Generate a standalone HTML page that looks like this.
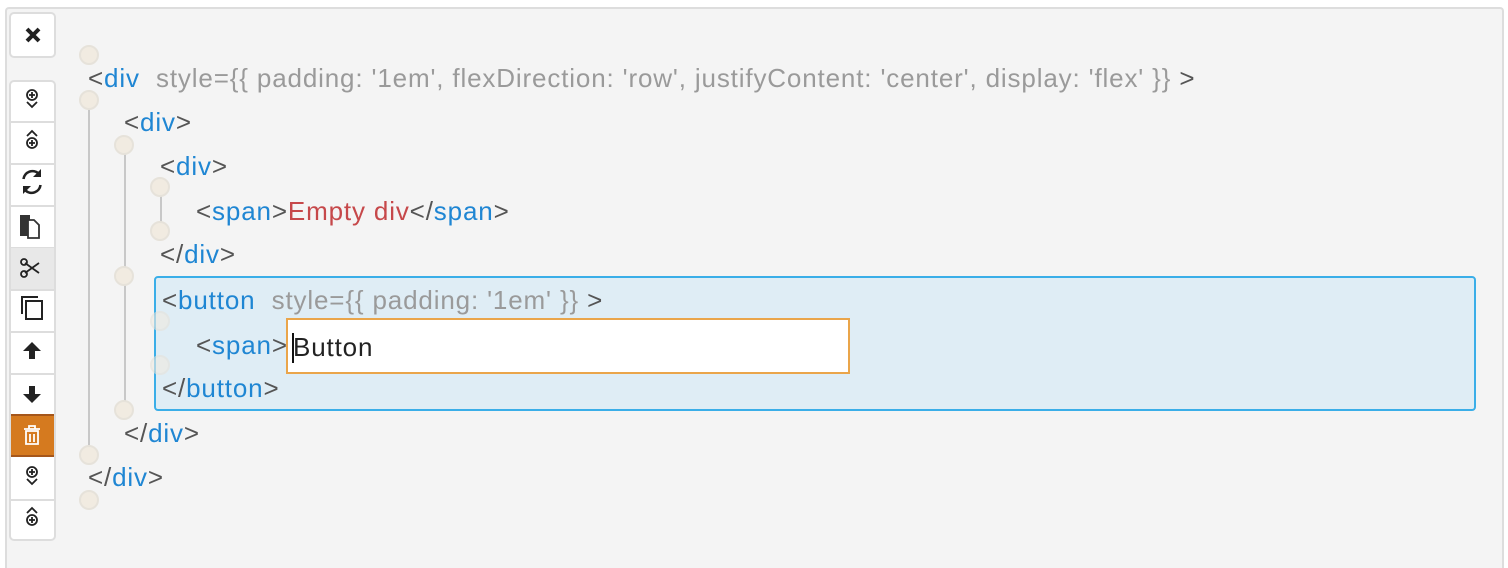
<!DOCTYPE html>
<html style="width:1508px;height:568px;overflow:hidden"><head><style>
*{margin:0;padding:0;box-sizing:border-box}
body{width:1508px;height:568px;background:#fff;position:relative;overflow:hidden;font-family:"Liberation Sans",sans-serif}
#frame{position:absolute;left:5px;top:7px;width:1499px;height:561px;background:#f4f4f4;border:2px solid #ddd;border-bottom:none;border-radius:4px 4px 0 0}
.btn{position:absolute;left:9px;width:47px;background:#fff;border:2px solid #ddd;display:flex;align-items:center;justify-content:center}
.l{position:absolute;height:30px;line-height:30px;font-size:26px;letter-spacing:0.85px;color:#555;white-space:nowrap}
.b{color:#1f86d3}.a{color:#9a9a9a}.r{color:#c6484a}
.c{position:absolute;width:20px;height:20px;border-radius:50%;background:#f1ebe1;border:2px solid #e6e2da}
.v{position:absolute;width:2px;background:#c8c8c8}
</style></head><body>
<div id="frame"></div>
<div class="btn" style="top:12px;height:46px;border-radius:5px"><svg width="18" height="18" viewBox="0 0 18 18"><path d="M3 3L15 15M15 3L3 15" stroke="#222" stroke-width="4"/></svg></div>
<div style="position:absolute;left:9px;top:80px;width:47px;height:461px;border:2px solid #ddd;border-radius:5px;background:#fff;overflow:hidden">
<div style="position:absolute;left:0;top:39px;width:43px;height:2px;background:#ddd"></div>
<div style="position:absolute;left:0;top:81px;width:43px;height:2px;background:#ddd"></div>
<div style="position:absolute;left:0;top:123px;width:43px;height:2px;background:#ddd"></div>
<div style="position:absolute;left:0;top:165px;width:43px;height:2px;background:#ddd"></div>
<div style="position:absolute;left:0;top:166px;width:43px;height:42px;background:#e8e8e8"></div>
<div style="position:absolute;left:0;top:207px;width:43px;height:2px;background:#ddd"></div>
<div style="position:absolute;left:0;top:249px;width:43px;height:2px;background:#ddd"></div>
<div style="position:absolute;left:0;top:291px;width:43px;height:2px;background:#ddd"></div>
<div style="position:absolute;left:-2px;top:332px;width:47px;height:43px;background:#d57a1f;border:2px solid #a5561a"></div>
<div style="position:absolute;left:0;top:417px;width:43px;height:2px;background:#ddd"></div>
</div>
<svg style="position:absolute;left:0;top:0" width="60" height="568">
<g fill="none" stroke="#222" stroke-width="1.8">
<circle cx="32" cy="95" r="5"/><path d="M32 92v6M29 95h6M27 102l5 5 5-5"/>
<circle cx="32" cy="143" r="5"/><path d="M32 140v6M29 143h6M27 136l5-5 5 5"/>
<circle cx="32" cy="472" r="5"/><path d="M32 469v6M29 472h6M27 479l5 5 5-5"/>
<circle cx="32" cy="520" r="5"/><path d="M32 517v6M29 520h6M27 513l5-5 5 5"/>
<path d="M23.5 179a9 9 0 0 1 15-5.5M40.5 185a9 9 0 0 1-15 5.5" stroke-width="2.6"/>
<path d="M26 301h16v18H26z" stroke-width="2"/><path d="M22 314V297h16" stroke-width="2"/>
<path d="M25 263l14 10M25 273l14-10"/><circle cx="24" cy="262" r="3"/><circle cx="24" cy="274" r="3"/>
</g>
<path d="M41 169v8h-8zM23 194v-8h8z" fill="#222"/>
<path d="M20 215h10v21h-10z" fill="#333"/><path d="M28 220h6l5 5v13H28z" fill="#fff" stroke="#333" stroke-width="1.8"/>
<path d="M32 342l-9 9h6v8h6v-8h6z" fill="#222"/>
<path d="M32 403l-9-9h6v-8h6v8h6z" fill="#222"/>
<g fill="none" stroke="#fff" stroke-width="1.8"><path d="M24 429h16M29 429v-3h6v3M26 431h12v13H26zM30 434v8M34 434v8"/></g>
</svg>
<div class="v" style="left:88px;top:100px;height:355px"></div>
<div class="v" style="left:124px;top:145px;height:265px"></div>
<div class="v" style="left:160px;top:187px;height:44px"></div>
<div style="position:absolute;left:154px;top:276px;width:1322px;height:135px;background:#dfedf5;border:2px solid #3aaee8;border-radius:4px"></div>
<div class="c" style="left:79px;top:45px"></div>
<div class="c" style="left:79px;top:90px"></div>
<div class="c" style="left:114px;top:135px"></div>
<div class="c" style="left:150px;top:177px"></div>
<div class="c" style="left:150px;top:221px"></div>
<div class="c" style="left:114px;top:266px"></div>
<div class="c" style="left:150px;top:311px;opacity:.6"></div>
<div class="c" style="left:150px;top:355px;opacity:.6"></div>
<div class="c" style="left:114px;top:400px"></div>
<div class="c" style="left:79px;top:445px"></div>
<div class="c" style="left:79px;top:490px"></div>
<div class="l" style="left:88px;top:63px">&lt;<span class="b">div</span> &nbsp;<span class="a">style={{ padding: '1em', flexDirection: 'row', justifyContent: 'center', display: 'flex' }}</span> &gt;</div>
<div class="l" style="left:124px;top:107px">&lt;<span class="b">div</span>&gt;</div>
<div class="l" style="left:160px;top:151px">&lt;<span class="b">div</span>&gt;</div>
<div class="l" style="left:196px;top:196px">&lt;<span class="b">span</span>&gt;<span class="r">Empty div</span>&lt;/<span class="b">span</span>&gt;</div>
<div class="l" style="left:160px;top:239px">&lt;/<span class="b">div</span>&gt;</div>
<div class="l" style="left:162px;top:285px">&lt;<span class="b">button</span> &nbsp;<span class="a">style={{ padding: '1em' }}</span> &gt;</div>
<div class="l" style="left:196px;top:330px">&lt;<span class="b">span</span>&gt;</div>
<div style="position:absolute;left:286px;top:318px;width:564px;height:56px;background:#fff;border:2px solid #eaa54a"></div>
<div style="position:absolute;left:292px;top:333px;width:2px;height:30px;background:#111"></div>
<div class="l" style="left:293px;top:332px;color:#222">Button</div>
<div class="l" style="left:162px;top:373px">&lt;/<span class="b">button</span>&gt;</div>
<div class="l" style="left:124px;top:418px">&lt;/<span class="b">div</span>&gt;</div>
<div class="l" style="left:88px;top:462px">&lt;/<span class="b">div</span>&gt;</div>
</body></html>
